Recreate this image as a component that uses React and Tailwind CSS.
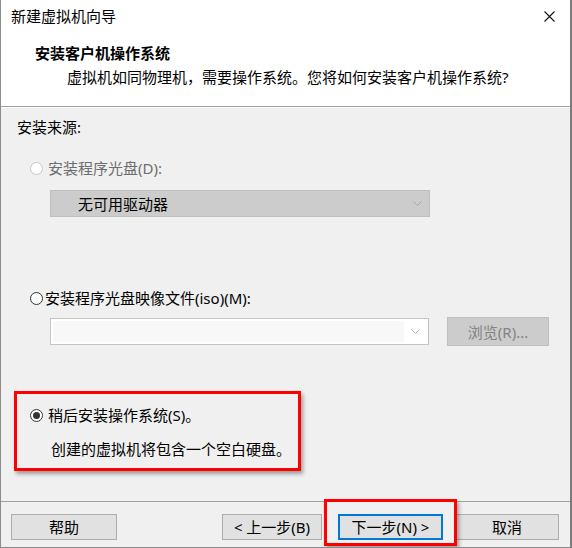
import React from 'react';

function Radio({ checked, disabled }) {
  return (
    <span
      className={
        disabled
          ? 'w-[13px] h-[13px] rounded-full border border-[#c6c6c6] bg-white flex items-center justify-center shrink-0'
          : 'w-[13px] h-[13px] rounded-full border border-[#333333] bg-white flex items-center justify-center shrink-0'
      }
    >
      {checked && <span className="w-[7px] h-[7px] rounded-full bg-[#333333]" />}
    </span>
  );
}

function Chevron({ color }) {
  return (
    <svg width="9" height="5" viewBox="0 0 9 5">
      <path d="M0.5 0.5 L4.5 4.5 L8.5 0.5" fill="none" stroke={color} strokeWidth="1" />
    </svg>
  );
}

export default function App() {
  return (
    <div className="w-[572px] h-[548px] flex flex-col bg-[#f0f0f0] border-l border-l-[#8c8c8c] border-r-2 border-r-[#7c7c7c] border-b border-b-[#8c8c8c] overflow-hidden text-[15px] leading-[20px] text-black font-['Noto_Sans','Noto_Sans_CJK_SC',sans-serif]">
      {/* Title bar + header */}
      <div className="bg-white">
        <div className="h-[32px] flex items-center justify-between pl-[10px] pr-[15px]">
          <span>新建虚拟机向导</span>
          <svg width="11" height="11" viewBox="0 0 11 11">
            <path d="M0.5 0.5 L10.5 10.5 M10.5 0.5 L0.5 10.5" stroke="#111" strokeWidth="1.1" />
          </svg>
        </div>
        <div className="h-[74px] pl-[34px] pt-[11px]">
          <div className="font-bold">安装客户机操作系统</div>
          <div className="pl-[32px] mt-[4px]">虚拟机如同物理机，需要操作系统。您将如何安装客户机操作系统?</div>
        </div>
      </div>
      <div className="h-0 border-t border-t-[#a0a0a0] border-b border-b-white" />

      {/* Body */}
      <div className="flex-1 flex flex-col pl-[16px] pt-[9px]">
        <div>安装来源:</div>

        <div className="mt-[21px] ml-[13px] flex items-center gap-[5px] text-[#6d6d6d]">
          <Radio disabled />
          <span>安装程序光盘(D):</span>
        </div>
        <div className="mt-[12px] ml-[33px] w-[380px] h-[27px] bg-[#cccccc] border border-[#bfbfbf] flex items-center justify-between pl-[27px] pr-[7px]">
          <span>无可用驱动器</span>
          <Chevron color="#a8a8a8" />
        </div>

        <div className="mt-[71px] ml-[13px] flex items-center gap-[2px]">
          <Radio />
          <span>安装程序光盘映像文件(iso)(M):</span>
        </div>
        <div className="mt-[10px] ml-[33px] flex items-start">
          <div className="w-[379px] h-[27px] bg-white border border-[#c4c4c4] flex items-stretch p-[2px]">
            <div className="flex-1 bg-[#f8f8f8]" />
            <div className="w-[22px] flex items-center justify-center">
              <Chevron color="#b4b4b4" />
            </div>
          </div>
          <div className="ml-[18px] -mt-[1px] w-[102px] h-[29px] bg-[#cccccc] border border-[#bfbfbf] flex items-center justify-center text-[#838383]">
            浏览(R)...
          </div>
        </div>

        <div className="mt-[45px] -ml-[3px] w-[287px] h-[80px] border-[3px] border-[#ff0000] shadow-[2px_3px_4px_rgba(0,0,0,0.35)] pt-[11px]">
          <div className="ml-[13px] flex items-center gap-[5px]">
            <Radio checked />
            <span>稍后安装操作系统(S)。</span>
          </div>
          <div className="mt-[14px] ml-[34px]">创建的虚拟机将包含一个空白硬盘。</div>
        </div>
      </div>

      {/* Footer */}
      <div className="h-[46px] border-t border-t-[#a0a0a0] pt-[12px] flex items-start justify-between pl-[10px] pr-[11px]">
        <div className="w-[106px] h-[26px] bg-[#e1e1e1] border border-[#adadad] flex items-center justify-center">帮助</div>
        <div className="flex items-start">
          <div className="w-[100px] h-[26px] bg-[#e1e1e1] border border-[#adadad] flex items-center justify-center">&lt; 上一步(B)</div>
          <div className="relative ml-[16px]">
            <div className="absolute -left-[14px] -right-[14px] -top-[15px] -bottom-[6px] border-[3px] border-[#ff0000] shadow-[2px_3px_4px_rgba(0,0,0,0.35)]" />
            <div className="w-[105px] h-[26px] bg-[#e1e1e1] border-2 border-[#0078d7] flex items-center justify-center">下一步(N) &gt;</div>
          </div>
          <div className="ml-[12px] w-[104px] h-[26px] bg-[#e1e1e1] border border-[#adadad] flex items-center justify-center">取消</div>
        </div>
      </div>
    </div>
  );
}
